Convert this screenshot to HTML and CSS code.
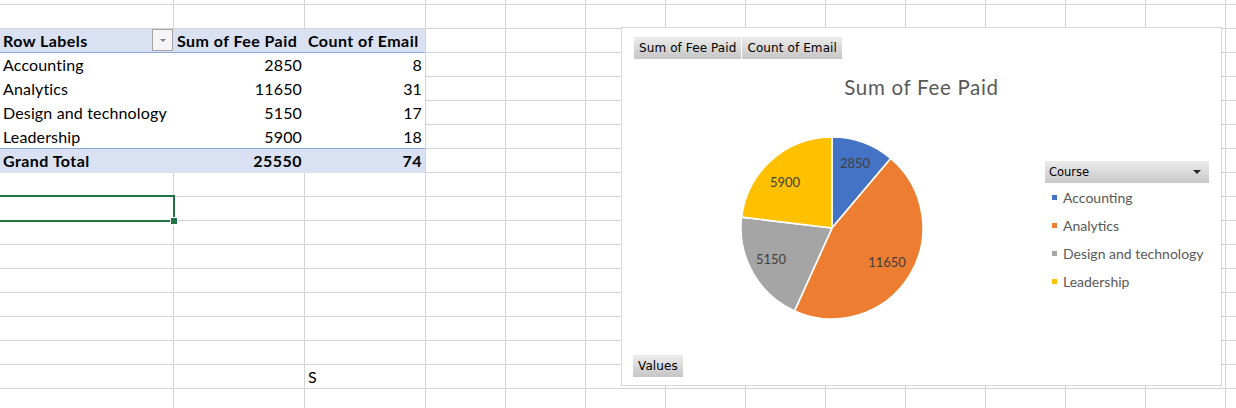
FILE: index.html
```html
<!DOCTYPE html>
<html>
<head>
<meta charset="utf-8">
<title>Pivot</title>
<link rel="stylesheet" href="styles.css">
</head>
<body>
<div class="sheet">
  <div class="pivot">
    <div class="prow head">
      <div class="pc label hl"><span>Row Labels</span><span class="dd"><span class="dd-tri"></span></span></div>
      <div class="pc">Sum of Fee Paid</div>
      <div class="pc">Count of Email</div>
    </div>
    <div class="prow"><div class="pc">Accounting</div><div class="pc num">2850</div><div class="pc num">8</div></div>
    <div class="prow"><div class="pc">Analytics</div><div class="pc num">11650</div><div class="pc num">31</div></div>
    <div class="prow"><div class="pc">Design and technology</div><div class="pc num">5150</div><div class="pc num">17</div></div>
    <div class="prow last"><div class="pc">Leadership</div><div class="pc num">5900</div><div class="pc num">18</div></div>
    <div class="prow total"><div class="pc">Grand Total</div><div class="pc num">25550</div><div class="pc num">74</div></div>
  </div>
  <div class="selected"><span class="handle"></span></div>
  <div class="cell s-cell">S</div>

  <div class="chart">
    <div class="fields"><span class="fbtn">Sum of Fee Paid</span><span class="fbtn">Count of Email</span></div>
    <div class="title">Sum of Fee Paid</div>
    <div class="plot">
      <svg class="pie" width="200" height="200" viewBox="0 0 200 200">
        <path class="s1" d="M100,100 L100,9 A91,91 0 0,1 158.68,30.45 Z"/>
        <path class="s2" d="M100,100 L158.68,30.45 A91,91 0 0,1 62.54,182.93 Z"/>
        <path class="s3" d="M100,100 L62.54,182.93 A91,91 0 0,1 9.65,89.12 Z"/>
        <path class="s4" d="M100,100 L9.65,89.12 A91,91 0 0,1 100,9 Z"/>
        <text x="123" y="35">2850</text>
        <text x="155" y="134">11650</text>
        <text x="39" y="130.5">5150</text>
        <text x="53" y="54">5900</text>
      </svg>
      <div class="legend">
        <div class="lhead"><span>Course</span><span class="ltri"></span></div>
        <div class="litem"><span class="sw c1"></span>Accounting</div>
        <div class="litem"><span class="sw c2"></span>Analytics</div>
        <div class="litem"><span class="sw c3"></span>Design and technology</div>
        <div class="litem"><span class="sw c4"></span>Leadership</div>
      </div>
    </div>
    <div class="values"><span class="fbtn">Values</span></div>
  </div>
</div>
</body>
</html>
```

FILE: styles.css
```css
html, body {
  margin: 0;
  padding: 0;
  background: #fff;
}

.sheet {
  position: relative;
  width: 1236px;
  height: 408px;
  overflow: hidden;
  display: grid;
  grid-template-columns: 174px 131px 121px repeat(10, 80px);
  grid-template-rows: 5px repeat(17, 24px);
  font-family: "Lato", sans-serif;
  font-size: 16px;
  letter-spacing: 0.15px;
  color: #000;
  background-color: #fff;
  background-image:
    linear-gradient(to right, transparent 173px, #d4d4d4 173px, #d4d4d4 174px, transparent 174px),
    linear-gradient(to right, transparent 304px, #d4d4d4 304px, #d4d4d4 305px, transparent 305px),
    repeating-linear-gradient(to right, #d4d4d4 0 1px, transparent 1px 80px),
    repeating-linear-gradient(to bottom, #d4d4d4 0 1px, transparent 1px 24px);
  background-position: 0 0, 0 0, 425px 0, 0 4px;
  background-size: 100% 100%, 100% 100%, 811px 100%, 100% 100%;
  background-repeat: no-repeat, no-repeat, no-repeat, repeat;
}

/* pivot table */
.pivot {
  grid-column: 1 / 4;
  grid-row: 3 / 9;
  margin-right: 1px;
  background: #fff;
  display: grid;
  grid-template-rows: repeat(6, 24px);
}

.prow {
  display: grid;
  grid-template-columns: 174px 131px 120px;
  box-sizing: border-box;
  height: 24px;
}

.prow.head {
  background: #d9e1f2;
  border-bottom: 1px solid #8ea9db;
  font-weight: 700;
  letter-spacing: 0.45px;
}

.prow.last {
  border-bottom: 1px solid #8ea9db;
}

.prow.total {
  background: #d9e1f2;
  font-weight: 700;
  letter-spacing: 0.45px;
}

.pc {
  line-height: 24px;
  padding: 0 3px;
  white-space: nowrap;
  overflow: hidden;
}

.pc.num {
  text-align: right;
}

.pc.hl {
  display: flex;
  justify-content: space-between;
  align-items: flex-start;
  padding-right: 1px;
}

.dd {
  width: 21px;
  height: 22px;
  box-sizing: border-box;
  border: 1px solid #a6a6a6;
  background: #f5f5f5;
  display: flex;
  align-items: center;
  justify-content: center;
}

.dd-tri {
  width: 0;
  height: 0;
  border-left: 3px solid transparent;
  border-right: 3px solid transparent;
  border-top: 3px solid #808080;
}

/* selected cell */
.selected {
  grid-column: 1;
  grid-row: 10;
  position: relative;
  box-sizing: border-box;
  margin: -2px -1px -1px -2px;
  border: 2px solid #217346;
}

.handle {
  position: absolute;
  right: -5px;
  bottom: -5px;
  width: 6px;
  height: 6px;
  background: #217346;
  border: 1px solid #fff;
}

.cell {
  line-height: 24px;
  padding: 0 3px;
}

.s-cell {
  grid-column: 3;
  grid-row: 17;
}

/* chart */
.chart {
  position: absolute;
  left: 621px;
  top: 27px;
  width: 599px;
  height: 357px;
  border: 1px solid #d9d9d9;
  background: #fff;
  display: flex;
  flex-direction: column;
  letter-spacing: 0;
}

.fields {
  display: flex;
  gap: 1px;
  margin: 9px 0 0 12px;
}

.fbtn {
  display: block;
  height: 22px;
  line-height: 22px;
  padding: 0 5px;
  font-family: "DejaVu Sans", sans-serif;
  font-size: 12px;
  letter-spacing: 0.1px;
  color: #000;
  background: linear-gradient(#ececec, #c5c5c5);
  white-space: nowrap;
}

.title {
  margin-top: 16px;
  height: 24px;
  line-height: 24px;
  text-align: center;
  font-size: 20.5px;
  letter-spacing: 0.7px;
  color: #595959;
}

.plot {
  display: flex;
  align-items: flex-start;
  margin-top: 29px;
  margin-left: 110px;
}

.pie {
  display: block;
  flex: none;
}

.pie path {
  stroke: #fff;
  stroke-width: 1.6;
  stroke-linejoin: round;
}

.pie .s1 { fill: #4472c4; }
.pie .s2 { fill: #ed7d31; }
.pie .s3 { fill: #a5a5a5; }
.pie .s4 { fill: #ffc000; }

.pie text {
  font-family: "Lato", sans-serif;
  font-size: 13px;
  fill: #404040;
  text-anchor: middle;
  dominant-baseline: central;
}

.legend {
  margin-left: 113px;
  margin-top: 33px;
  width: 164px;
}

.lhead {
  height: 22px;
  display: flex;
  align-items: center;
  justify-content: space-between;
  padding: 0 8px 0 4px;
  font-family: "DejaVu Sans", sans-serif;
  font-size: 11.5px;
  color: #000;
  background: linear-gradient(#ececec, #c8c8c8);
}

.ltri {
  width: 0;
  height: 0;
  border-left: 4px solid transparent;
  border-right: 4px solid transparent;
  border-top: 4px solid #262626;
}

.litem {
  height: 28px;
  display: flex;
  align-items: center;
  gap: 6px;
  padding-left: 7px;
  font-size: 14px;
  letter-spacing: 0;
  color: #595959;
  white-space: nowrap;
}

.sw {
  width: 5px;
  height: 5px;
  flex: none;
}

.sw.c1 { background: #4472c4; }
.sw.c2 { background: #ed7d31; }
.sw.c3 { background: #a5a5a5; }
.sw.c4 { background: #ffc000; }

.values {
  margin-top: auto;
  margin-left: 11px;
  margin-bottom: 8px;
  display: flex;
}
```
